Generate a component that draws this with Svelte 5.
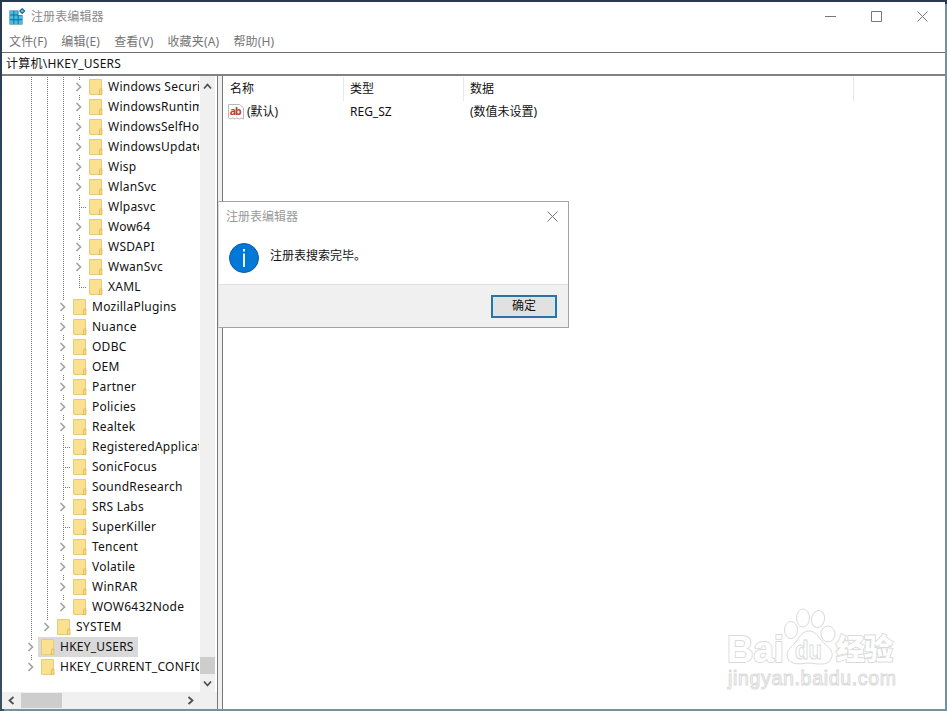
<script lang="ts">
  type Item = { name: string; depth: number; leaf?: boolean; last?: boolean; selected?: boolean };

  const menu = ['文件(F)', '编辑(E)', '查看(V)', '收藏夹(A)', '帮助(H)'];

  const items: Item[] = [
    { name: 'Windows Security Health', depth: 3 },
    { name: 'WindowsRuntime', depth: 3 },
    { name: 'WindowsSelfHost', depth: 3 },
    { name: 'WindowsUpdate', depth: 3 },
    { name: 'Wisp', depth: 3 },
    { name: 'WlanSvc', depth: 3 },
    { name: 'Wlpasvc', depth: 3, leaf: true },
    { name: 'Wow64', depth: 3 },
    { name: 'WSDAPI', depth: 3 },
    { name: 'WwanSvc', depth: 3 },
    { name: 'XAML', depth: 3, leaf: true, last: true },
    { name: 'MozillaPlugins', depth: 2 },
    { name: 'Nuance', depth: 2 },
    { name: 'ODBC', depth: 2 },
    { name: 'OEM', depth: 2 },
    { name: 'Partner', depth: 2 },
    { name: 'Policies', depth: 2 },
    { name: 'Realtek', depth: 2 },
    { name: 'RegisteredApplications', depth: 2, leaf: true },
    { name: 'SonicFocus', depth: 2, leaf: true },
    { name: 'SoundResearch', depth: 2, leaf: true },
    { name: 'SRS Labs', depth: 2 },
    { name: 'SuperKiller', depth: 2, leaf: true },
    { name: 'Tencent', depth: 2 },
    { name: 'Volatile', depth: 2 },
    { name: 'WinRAR', depth: 2 },
    { name: 'WOW6432Node', depth: 2, last: true },
    { name: 'SYSTEM', depth: 1, last: true },
    { name: 'HKEY_USERS', depth: 0, selected: true },
    { name: 'HKEY_CURRENT_CONFIG', depth: 0, last: true }
  ];

  let dialogOpen = $state(true);
</script>

<div class="desktop">
  <div class="window">
    <header class="titlebar">
      <svg class="app-icon" width="17" height="17" viewBox="0 0 17 17">
        <path d="M0.5 2.5h9v4.5h4v9.5h-13z" fill="#17678f" />
        <g fill="#45bde9">
          <path d="M1 3h3.4v3.6H1zM5.3 3h3.4v3.6H5.3zM1 7.6h3.4v3.6H1zM5.3 7.6h3.4v3.6H5.3zM9.6 7.6H13v3.6H9.6zM1 12.2h3.4V16H1zM5.3 12.2h3.4V16H5.3zM9.6 12.2H13V16H9.6z" />
        </g>
        <path d="M13.2 0.7l2.4 2.4-2.4 2.4-2.4-2.4z" fill="#6fcdec" stroke="#1d6682" stroke-width="1.2" />
      </svg>
      <span class="title">注册表编辑器</span>
      <div class="controls">
        <svg width="11" height="11"><path d="M0 5.5h11" /></svg>
        <svg width="11" height="11"><path d="M0.5 0.5h10v10h-10z" /></svg>
        <svg width="11" height="11"><path d="M0.5 0.5l10 10M10.5 0.5l-10 10" /></svg>
      </div>
    </header>

    <nav class="menubar">
      {#each menu as m}
        <span>{m}</span>
      {/each}
    </nav>

    <div class="address">计算机\HKEY_USERS</div>

    <main class="panes">
      <section class="tree-pane">
        <div class="tree-body">
          <div class="tree">
            {#each items as item}
              <div class="row">
                {#each Array(item.depth) as _}
                  <span class="cell"><i class="guide"></i></span>
                {/each}
                <span class="cell">
                  <i class="guide" class:half={item.last}></i>
                  {#if item.leaf}
                    <i class="branch"></i>
                  {:else}
                    <svg class="chevron" width="9" height="14" viewBox="0 0 9 14"><path d="M2.5 3l4 4-4 4" /></svg>
                  {/if}
                </span>
                <span class="node" class:selected={item.selected}>
                  <svg class="folder" width="14" height="18" viewBox="0 0 14 18">
                    <path d="M0.5 1.5h12v15h-12z" fill="#fbe18f" stroke="#e6cb78" />
                    <path d="M10.8 11h2.2v5.5h-2.8z" fill="#f8d97e" stroke="#d9b95c" stroke-width="0.8" />
                  </svg>
                  <span class="label">{item.name}</span>
                </span>
              </div>
            {/each}
          </div>
          <div class="vscroll">
            <svg width="9" height="9" viewBox="0 0 9 9"><path d="M1 6.5l3.5-4 3.5 4" /></svg>
            <div class="vthumb"></div>
            <svg width="9" height="9" viewBox="0 0 9 9"><path d="M1 2.5l3.5 4 3.5-4" /></svg>
          </div>
        </div>
        <div class="hscroll">
          <svg width="9" height="9" viewBox="0 0 9 9"><path d="M6.5 1l-4 3.5 4 3.5" /></svg>
          <div class="hthumb"></div>
          <svg width="9" height="9" viewBox="0 0 9 9"><path d="M2.5 1l4 3.5-4 3.5" /></svg>
        </div>
      </section>

      <section class="values">
        <div class="vrow head">
          <span>名称</span>
          <span>类型</span>
          <span class="wide">数据</span>
        </div>
        <div class="vrow">
          <span class="name">
            <svg width="16" height="16" viewBox="0 0 16 16">
              <path d="M0.5 0.5h11l4 3.5v11l-2-1-2 1-2.5-1-2 1-2.5-1-2 1-2-1z" fill="#fff" stroke="#b9b9b9" />
              <text x="7.7" y="10.5" text-anchor="middle" textLength="12">ab</text>
            </svg>(默认)
          </span>
          <span>REG_SZ</span>
          <span class="wide">(数值未设置)</span>
        </div>
      </section>
    </main>
  </div>

  {#if dialogOpen}
    <div class="dialog">
      <div class="dialog-title">
        <span>注册表编辑器</span>
        <svg width="11" height="11"><path d="M0.5 0.5l10 10M10.5 0.5l-10 10" /></svg>
      </div>
      <div class="dialog-body">
        <svg width="30" height="30" viewBox="0 0 30 30">
          <circle cx="15" cy="15" r="14.5" fill="#0078d7" stroke="#11599c" />
          <path d="M15 10.5v13.5M15 6v2.4" stroke="#fff" stroke-width="1.8" />
        </svg>
        <span>注册表搜索完毕。</span>
      </div>
      <div class="dialog-footer">
        <button onclick={() => (dialogOpen = false)}>确定</button>
      </div>
    </div>
  {/if}

  <svg class="watermark" width="180" height="86" viewBox="0 0 180 86">
    <text class="heavy" x="5" y="54" font-size="37" textLength="57" lengthAdjust="spacingAndGlyphs">Bai</text>
    <ellipse cx="69" cy="22" rx="6.5" ry="8.5" />
    <ellipse cx="81" cy="10" rx="6.5" ry="9" />
    <ellipse cx="96" cy="11" rx="6.5" ry="8.5" transform="rotate(12 96 11)" />
    <ellipse cx="106" cy="26" rx="7" ry="8" />
    <path d="M87 23c8 0 10 8 16 13s9 9 6 15c-3 7-12 5-22 4-9 1-18 2-21-4-3-7 2-11 6-15 5-5 7-13 15-13z" />
    <text x="73" y="51" font-size="26" font-weight="700" textLength="27" lengthAdjust="spacingAndGlyphs">du</text>
    <text class="heavy cjk" x="114" y="52" font-size="29" textLength="57">经验</text>
    <text x="6" y="77" font-size="19.5" textLength="168">jingyan.baidu.com</text>
  </svg>
</div>

<style>
  :global(body) {
    margin: 0;
    overflow: hidden;
  }

  .desktop {
    position: relative;
    box-sizing: border-box;
    width: 947px;
    height: 711px;
    padding: 2px;
    background: linear-gradient(#28394f, #2b4a66 30%, #2f4d66 60%, #3c4d5b);
    font-family: 'Noto Sans', 'Noto Sans CJK SC', sans-serif;
    font-size: 12px;
    line-height: 20px;
    color: #111;
  }

  .window {
    display: flex;
    flex-direction: column;
    height: 707px;
    background: #fff;
    box-shadow: 2px 2px 0 #76909c;
  }

  svg {
    flex-shrink: 0;
  }

  /* Title bar and menu */
  .titlebar {
    display: flex;
    align-items: center;
    height: 29px;
    padding-left: 7px;
  }

  .title {
    margin-left: 5px;
    color: #8b8b8b;
    letter-spacing: 0.1px;
  }

  .controls {
    display: flex;
    gap: 35px;
    margin-left: auto;
    padding-right: 17px;
  }

  .controls path,
  .dialog-title path {
    fill: none;
    stroke: #777;
  }

  .menubar {
    display: flex;
    gap: 14px;
    height: 21px;
    padding-left: 7px;
    line-height: 21px;
    letter-spacing: 0.18px;
    color: #747474;
  }

  .address {
    height: 21px;
    padding-left: 4px;
    border-top: 1px solid #706e70;
    border-bottom: 2px solid #838183;
    line-height: 21px;
    letter-spacing: 0.25px;
  }

  /* Key tree */
  .panes {
    display: flex;
    flex: 1;
    min-height: 0;
  }

  .tree-pane {
    display: flex;
    flex-direction: column;
    width: 215px;
    border-right: 1px solid #777;
  }

  .tree-body {
    display: flex;
    flex: 1;
    min-height: 0;
    padding-right: 1px;
  }

  .tree {
    width: 197px;
    margin-right: 1px;
    padding-top: 1px;
    overflow: hidden;
  }

  .row {
    display: flex;
    height: 20px;
    padding-left: 20px;
    white-space: nowrap;
  }

  .cell {
    position: relative;
    flex: 0 0 16px;
    height: 20px;
  }

  .guide {
    position: absolute;
    left: 9px;
    top: 0;
    width: 1px;
    height: 20px;
    background: repeating-linear-gradient(#777 0 1px, transparent 1px 2px);
  }

  .guide.half {
    height: 11px;
  }

  .branch {
    position: absolute;
    left: 9px;
    top: 10px;
    width: 7px;
    height: 1px;
    background: repeating-linear-gradient(90deg, #777 0 1px, transparent 1px 2px);
  }

  .chevron {
    position: absolute;
    left: 4px;
    top: 3px;
    background: #fff;
  }

  .chevron path {
    fill: none;
    stroke: #a3a3a3;
    stroke-width: 1.7;
  }

  .node {
    display: flex;
    align-items: center;
    padding-right: 4px;
  }

  .folder {
    margin-left: 3px;
  }

  .label {
    margin-left: 5px;
    letter-spacing: 0.25px;
  }

  .node.selected {
    background: #d9d9d9;
  }

  /* Scroll bars */
  .vscroll {
    display: flex;
    flex-direction: column;
    align-items: center;
    width: 15px;
    padding: 6px 0 4px;
    background: #f0f0f0;
  }

  .vthumb {
    width: 15px;
    height: 17px;
    margin: auto 0 5px;
    background: #cdcdcd;
  }

  .hscroll {
    display: flex;
    align-items: center;
    height: 17px;
    padding: 0 22px 0 5px;
    background: #f0f0f0;
  }

  .hthumb {
    width: 41px;
    height: 15px;
    margin: 0 auto 0 5px;
    background: #cdcdcd;
  }

  .vscroll path,
  .hscroll path {
    fill: none;
    stroke: #505050;
    stroke-width: 1.8;
  }

  /* Value list */
  .values {
    flex: 1;
    margin-left: 4px;
    border-left: 1px solid #777;
    box-shadow: -4px 0 0 #f0f0f0;
  }

  .vrow {
    display: flex;
    height: 18px;
    padding: 2px 0 0 1px;
    line-height: 18px;
  }

  .vrow > span {
    box-sizing: border-box;
    width: 120px;
    padding-left: 6px;
  }

  .vrow > .wide {
    width: 390px;
  }

  .head {
    height: 24px;
    padding-top: 1px;
    line-height: 23px;
  }

  .head > span {
    border-right: 1px solid #e8e8e8;
  }

  .vrow > .name {
    display: flex;
    align-items: center;
    gap: 3px;
    padding-left: 4px;
  }

  .name text {
    font: 700 10.5px 'Noto Sans', sans-serif;
    fill: #b9432c;
  }

  /* Message box */
  .dialog {
    position: absolute;
    left: 218px;
    top: 201px;
    box-sizing: border-box;
    width: 351px;
    height: 127px;
    display: flex;
    flex-direction: column;
    border: 1px solid #a2a2a2;
    border-left-color: #ddd;
    background: #fff;
  }

  .dialog-title {
    display: flex;
    align-items: center;
    justify-content: space-between;
    height: 28px;
    padding: 0 10px 0 7px;
    color: #999;
  }

  .dialog-title span {
    padding-top: 1px;
  }

  .dialog-body {
    display: flex;
    flex: 1;
    align-items: center;
    gap: 11px;
    padding: 2px 0 0 10px;
  }

  .dialog-body span {
    margin-top: -4px;
  }

  .dialog-footer {
    display: flex;
    align-items: center;
    justify-content: flex-end;
    height: 42px;
    padding-right: 11px;
    border-top: 1px solid #dfdfdf;
    background: #f0f0f0;
  }

  button {
    box-sizing: border-box;
    width: 66px;
    height: 23px;
    padding: 0;
    border: 2px solid #2a74a4;
    background: #e1e1e1;
    box-shadow: inset 0 0 0 1px #c9ecfb;
    font: inherit;
    line-height: 18px;
    color: #111;
  }

  /* Watermark */
  .watermark {
    position: absolute;
    left: 722px;
    top: 608px;
    fill: #fff;
    stroke: #dadada;
    stroke-width: 1;
    font-family: 'Liberation Sans', sans-serif;
  }

  /* outline drawn outside the glyphs so that the fill stays bold */
  .watermark .heavy {
    font-weight: 700;
    stroke-width: 1.8;
    paint-order: stroke;
  }

  .watermark .cjk {
    font-family: 'Noto Sans CJK SC', sans-serif;
    font-weight: 900;
  }
</style>
